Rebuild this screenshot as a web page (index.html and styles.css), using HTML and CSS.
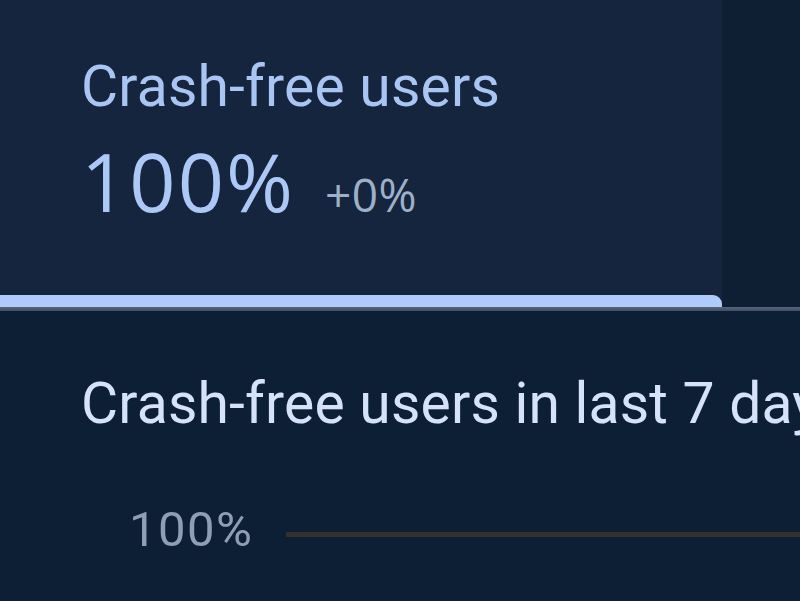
FILE: index.html
```html
<!DOCTYPE html>
<html lang="en">
<head>
<meta charset="utf-8">
<title>Crash-free users</title>
<link rel="stylesheet" href="styles.css">
</head>
<body>
  <div class="tabs">
    <div class="tab tab-active">
      <div class="tab-body">
        <div class="tab-title">Crash-free users</div>
        <div class="metric">
          <span class="metric-value">100%</span>
          <span class="metric-delta">+0%</span>
        </div>
      </div>
      <div class="tab-indicator"></div>
    </div>
    <div class="tab-rest"></div>
  </div>
  <div class="divider"></div>
  <section class="chart">
    <h2 class="chart-title">Crash-free users in last 7 days</h2>
    <div class="axis-row">
      <span class="axis-label">100%</span>
      <div class="axis-line"></div>
    </div>
  </section>
</body>
</html>
```
FILE: styles.css
```css
html, body {
  margin: 0;
  padding: 0;
}
body {
  width: 800px;
  height: 601px;
  overflow: hidden;
  background: #0c1f35;
  font-family: Roboto, "Liberation Sans", sans-serif;
}
.tabs {
  display: flex;
  height: 307px;
}
.tab {
  width: 722px;
  display: flex;
  flex-direction: column;
  background: #14253d;
}
.tab-body {
  flex: 1;
  padding: 53px 0 0 81px;
}
.tab-title {
  font-size: 57px;
  letter-spacing: 0.2px;
  line-height: normal;
  color: #a9c5f4;
  white-space: nowrap;
}
.metric {
  display: flex;
  align-items: baseline;
  gap: 30px;
  margin-top: 5px;
}
.metric-value {
  font-family: "Open Sans", sans-serif;
  font-size: 81px;
  letter-spacing: 2px;
  line-height: normal;
  color: #abc8f7;
}
.metric-delta {
  font-family: "Open Sans", sans-serif;
  font-size: 46px;
  letter-spacing: 0.5px;
  color: #9eafc7;
}
.tab-indicator {
  height: 12px;
  background: #aecbfa;
  border-radius: 0 9px 0 0;
}
.tab-rest {
  flex: 1;
  background: #0e1e33;
}
.divider {
  height: 4px;
  background: linear-gradient(#56667b, #3f4e63);
}
.chart {
  padding: 59px 0 0 81px;
  overflow: hidden;
}
.chart-title {
  margin: 0;
  font-size: 57px;
  font-weight: 400;
  letter-spacing: 0.2px;
  line-height: normal;
  color: #d6e2f8;
  white-space: nowrap;
}
.axis-row {
  display: flex;
  align-items: center;
  margin-top: 64px;
  padding-left: 48px;
}
.axis-label {
  font-size: 49px;
  letter-spacing: 1.5px;
  line-height: normal;
  color: #8e9eb6;
  white-space: nowrap;
}
.axis-line {
  flex: 1;
  height: 5px;
  margin-left: 32px;
  margin-top: 10px;
  background: #34302d;
}
```
